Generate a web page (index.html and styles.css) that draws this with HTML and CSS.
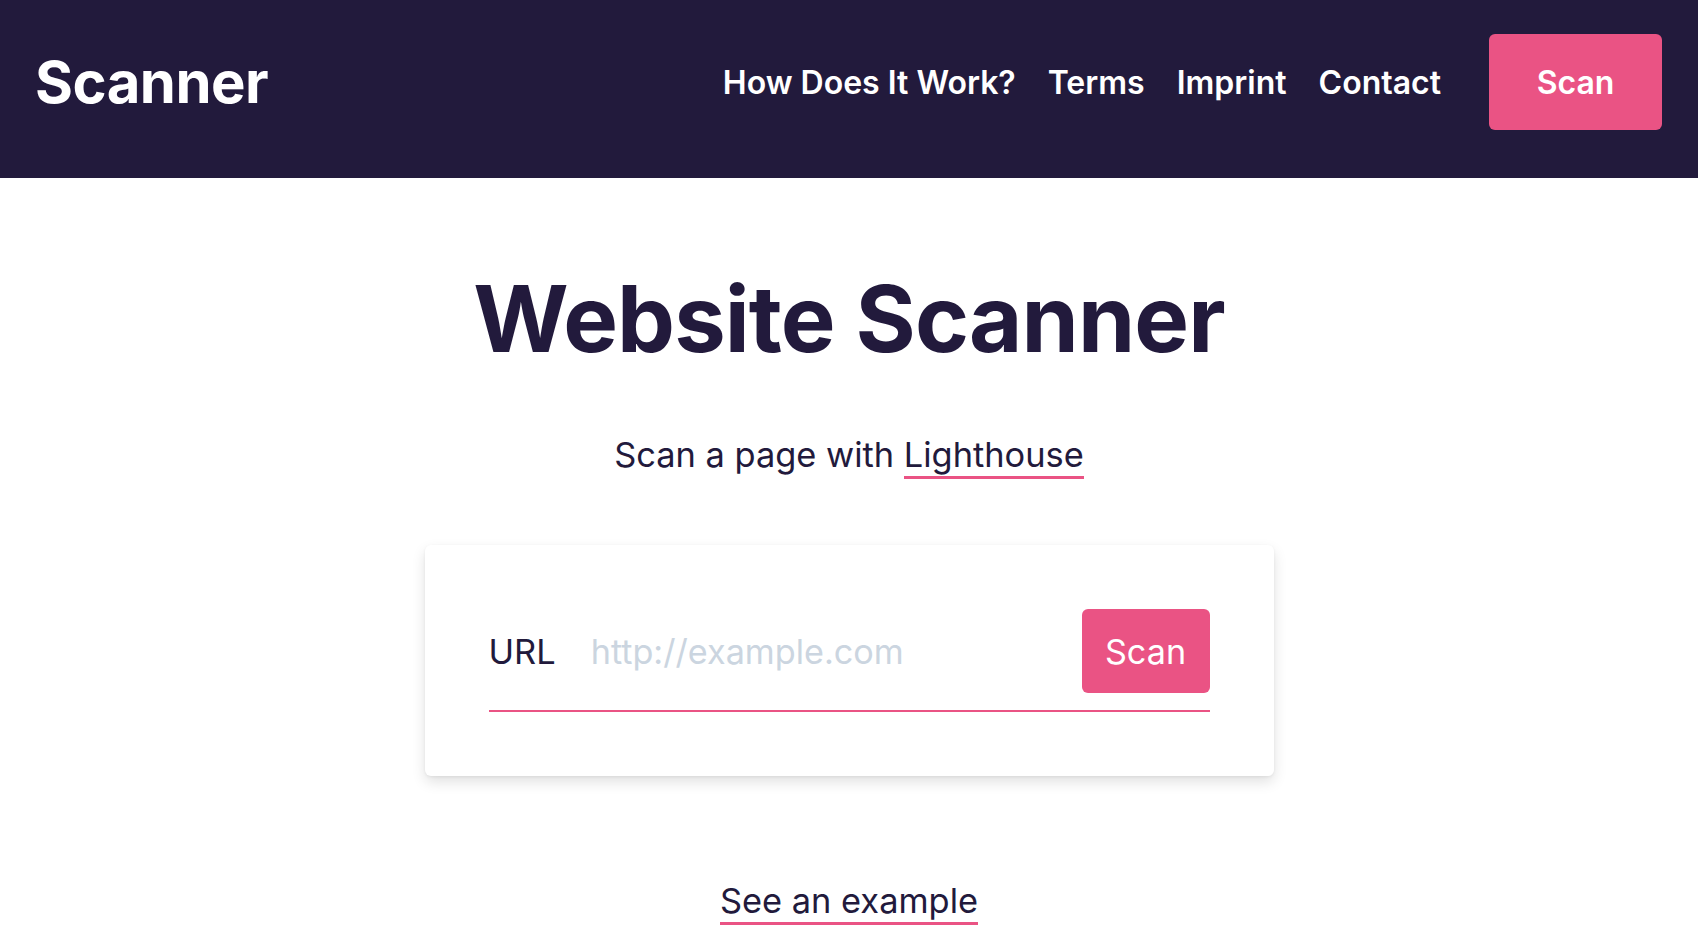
FILE: index.html
```html
<!DOCTYPE html>
<html lang="en">
<head>
<meta charset="utf-8">
<title>Website Scanner</title>
<link rel="stylesheet" href="styles.css">
</head>
<body>
<header class="topbar">
  <a class="brand" href="#">Scanner</a>
  <nav class="nav">
    <a class="nav-link" href="#">How Does It Work?</a>
    <a class="nav-link" href="#">Terms</a>
    <a class="nav-link" href="#">Imprint</a>
    <a class="nav-link" href="#">Contact</a>
    <a class="nav-button" href="#">Scan</a>
  </nav>
</header>
<main class="main">
  <h1 class="title">Website Scanner</h1>
  <p class="subtitle">Scan a page with <a class="link" href="#">Lighthouse</a></p>
  <form class="card">
    <div class="field">
      <label class="field-label" for="url">URL</label>
      <input class="field-input" id="url" type="text" placeholder="http://example.com">
      <button class="field-button" type="button">Scan</button>
    </div>
  </form>
  <div class="example"><a class="link" href="#">See an example</a></div>
</main>
</body>
</html>
```
FILE: styles.css
```css
* { box-sizing: border-box; }
html, body { margin: 0; padding: 0; }
body {
  font-family: Inter, "Noto Sans", "Liberation Sans", sans-serif;
  color: #221a3c;
  background: #ffffff;
}
a { color: inherit; text-decoration: none; }

.topbar {
  display: flex;
  align-items: center;
  justify-content: space-between;
  background: #221a3c;
  height: 178px;
  padding: 34px 36px 48px 35px;
}
.brand {
  color: #ffffff;
  font-weight: 700;
  font-size: 58px;
  letter-spacing: -0.5px;
  line-height: 1;
}
.nav {
  display: flex;
  align-items: center;
}
.nav-link {
  color: #ffffff;
  font-weight: 600;
  font-size: 32px;
  margin-left: 32px;
}
.nav-button {
  margin-left: 48px;
  background: #ea5384;
  color: #ffffff;
  font-weight: 600;
  font-size: 32px;
  height: 96px;
  width: 173px;
  display: flex;
  align-items: center;
  justify-content: center;
  border-radius: 6px;
}

.main {
  display: flex;
  flex-direction: column;
  align-items: center;
  padding-top: 86px;
}
.title {
  margin: 0;
  font-size: 92px;
  font-weight: 700;
  line-height: 1.2;
  letter-spacing: -0.9px;
}
.subtitle {
  margin: 60px 0 0;
  font-size: 34.4px;
  line-height: 1.2;
}
.link {
  display: inline-block;
  line-height: 1.21;
  border-bottom: 3px solid #ea5384;
}
.card {
  margin-top: 66px;
  width: 849px;
  padding: 64px;
  background: #ffffff;
  border-radius: 6px;
  box-shadow: 0 6px 14px rgba(0, 0, 0, 0.12), 0 1px 3px rgba(0, 0, 0, 0.06);
}
.field {
  display: flex;
  align-items: center;
  padding-bottom: 17px;
  border-bottom: 2px solid #ea5384;
}
.field-label {
  font-size: 34.4px;
  margin-right: 35px;
}
.field-input {
  flex: 1;
  min-width: 0;
  border: 0;
  outline: 0;
  padding: 0;
  font-family: inherit;
  font-size: 34.2px;
  color: #221a3c;
  background: transparent;
}
.field-input::placeholder { color: #cbd5e0; }
.field-button {
  background: #ea5384;
  color: #ffffff;
  border: 0;
  border-radius: 6px;
  height: 84px;
  width: 128px;
  font-family: inherit;
  font-size: 34.2px;
  padding: 0;
}
.example {
  margin-top: 104px;
  font-size: 34.4px;
  line-height: 1.2;
}
```
